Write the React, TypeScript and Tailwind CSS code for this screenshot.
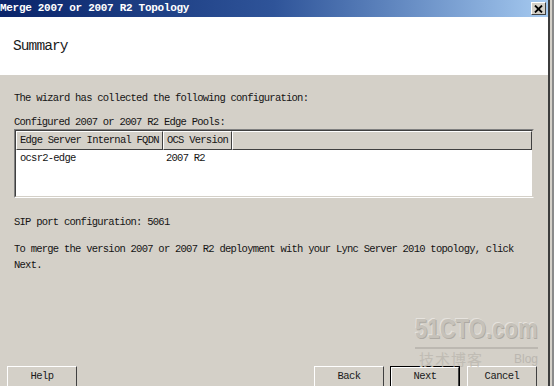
import React from "react";

const mono = { fontFamily: '"Liberation Mono", "DejaVu Sans Mono", monospace' };

function Btn({ label, primary }: { label: string; primary?: boolean }) {
  return (
    <div
      className={
        primary
          ? "h-[22px] w-[70px] border border-black"
          : "h-[22px] w-[70px]"
      }
    >
      <div className="flex h-full w-full items-center justify-center border-t border-l border-t-white border-l-white border-r border-b border-r-[#404040] border-b-[#404040] bg-[#d4d0c8] text-[10.5px] tracking-[-0.5px] text-[#1a1a1a]">
        {label}
      </div>
    </div>
  );
}

export default function App() {
  return (
    <div
      className="relative flex h-[386px] w-[554px] overflow-hidden border-r-2 border-[#8a8a8a] bg-[#d4d0c8]"
      style={mono}
    >
      <div className="flex h-full w-[550px] flex-col border-r-2 border-[#3c3c3c]">
        {/* title bar */}
        <div className="flex h-[17px] shrink-0 items-center bg-gradient-to-r from-[#0a246a] via-[#2f5499] to-[#a6caf0] pr-[2px]">
          <span className="text-[11px] font-bold leading-none tracking-[-0.3px] text-white">
            Merge 2007 or 2007 R2 Topology
          </span>
          <div className="ml-auto flex h-[13px] w-[15px] items-center justify-center border-t border-l border-t-white border-l-white border-r border-b border-r-[#404040] border-b-[#404040] bg-[#d4d0c8]">
            <svg width="9" height="8" viewBox="0 0 9 8">
              <path d="M1 0.5 L8 7.5 M8 0.5 L1 7.5" stroke="#000" strokeWidth="1.8" />
            </svg>
          </div>
        </div>

        {/* header */}
        <div className="flex h-[58px] shrink-0 items-center bg-white pl-[13px] pt-[2px]">
          <span className="text-[14.5px] tracking-[-0.9px] text-[#1a1a1a]">Summary</span>
        </div>

        {/* body */}
        <div className="flex flex-1 flex-col pl-[14px] text-[10.5px] tracking-[-0.75px] text-[#141414]">
          <div className="mt-[15px] leading-[16px]">
            The wizard has collected the following configuration:
          </div>
          <div className="mt-[9px] leading-[14px]">Configured 2007 or 2007 R2 Edge Pools:</div>

          <div className="h-[69px] w-[520px] border border-[#808080] border-b-white border-r-[#d4d0c8]">
            <div className="flex h-full flex-col border border-[#404040] border-b-[#d4d0c8] border-r-[#d4d0c8] bg-white">
              <div className="flex h-[19px] shrink-0 bg-[#d4d0c8]">
                <div className="flex w-[147px] items-center border-t border-l border-t-white border-l-white border-r border-b border-r-[#404040] border-b-[#404040] pl-[3px]">
                  Edge Server Internal FQDN
                </div>
                <div className="flex w-[69px] items-center border-t border-l border-t-white border-l-white border-r border-b border-r-[#404040] border-b-[#404040] pl-[3px]">
                  OCS Version
                </div>
                <div className="flex-1 border-t border-l border-t-white border-l-white border-r border-b border-r-[#404040] border-b-[#404040]" />
              </div>
              <div className="flex h-[18px] items-center">
                <div className="w-[147px] pl-[4px]">ocsr2-edge</div>
                <div className="pl-[3px]">2007 R2</div>
              </div>
            </div>
          </div>

          <div className="mt-[16px] leading-[16px]">SIP port configuration: 5061</div>
          <div className="mt-[11px] leading-[16px]">
            To merge the version 2007 or 2007 R2 deployment with your Lync Server 2010 topology, click
            <br />
            Next.
          </div>

          {/* buttons */}
          <div className="mt-auto -ml-[7px] flex h-[20px] items-start">
            <Btn label="Help" />
            <div className="ml-[237px]">
              <Btn label="Back" />
            </div>
            <div className="ml-[6px]">
              <Btn label="Next" primary />
            </div>
            <div className="ml-[7px]">
              <Btn label="Cancel" />
            </div>
          </div>
        </div>
      </div>

      {/* watermark */}
      <div className="pointer-events-none absolute left-[415px] top-[314px] w-[124px]">
        <div
          className="origin-left scale-x-[0.82] whitespace-nowrap text-[27px] font-bold leading-[30px] text-[#c6c2ba]"
          style={{ fontFamily: '"Liberation Sans", Arial, sans-serif', textShadow: "1px 1px 0 #aeaaa3, -1px -1px 0 #e6e3de" }}
        >
          51CTO.com
        </div>
        <div className="mt-[3px] h-[2px] w-[123px] bg-[#bcb8b1]" />
        <div className="mt-[2px] flex items-center justify-between pl-[4px] pr-[1px]">
          <span
            className="text-[15px] leading-[16px] tracking-[1px] text-[#c0bcb4]"
            style={{ fontFamily: '"Noto Sans CJK SC", sans-serif' }}
          >
            技术博客
          </span>
          <span
            className="text-[12px] leading-[16px] text-[#bbb7b0]"
            style={{ fontFamily: '"Liberation Sans", Arial, sans-serif' }}
          >
            Blog
          </span>
        </div>
      </div>
    </div>
  );
}
